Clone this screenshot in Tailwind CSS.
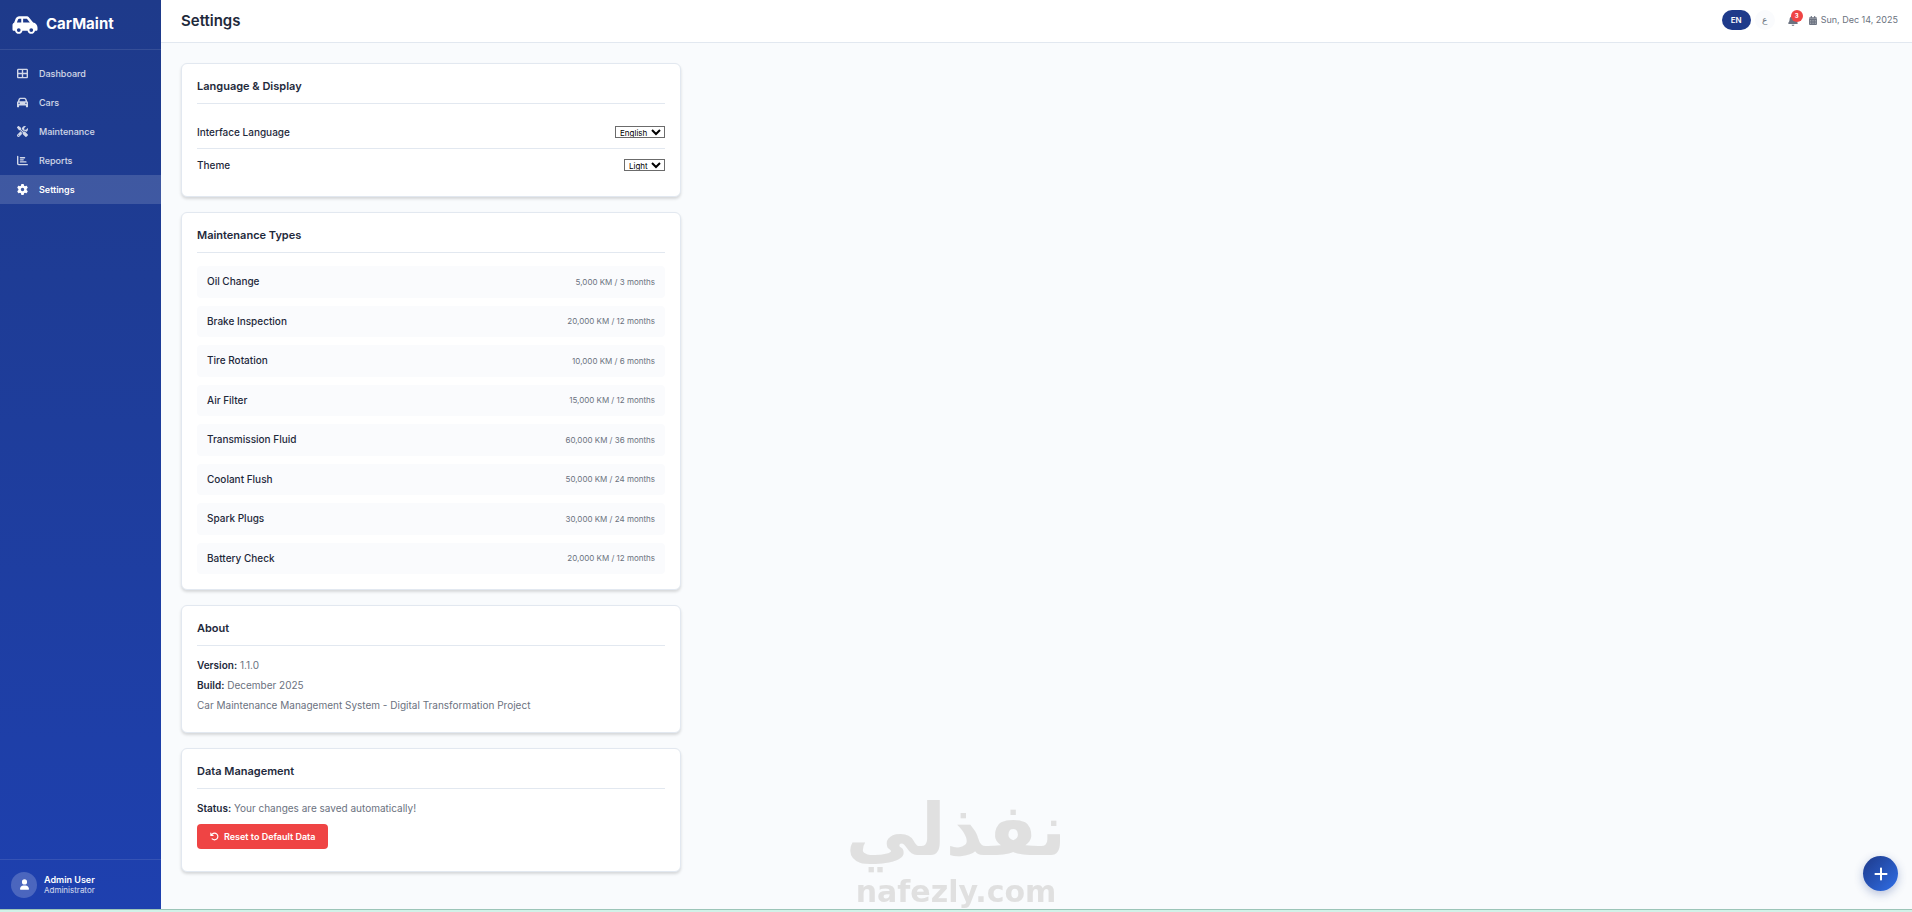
<!DOCTYPE html>
<html lang="en">
<head>
  <meta charset="UTF-8">
  <meta name="viewport" content="width=device-width, initial-scale=1.0">
  <title>CarMaint - Settings</title>
  <script src="https://cdn.jsdelivr.net/npm/@tailwindcss/browser@4"></script>
</head>
<body class="min-h-screen flex flex-col bg-[#f9fbfd] text-[#1e293b] font-['Inter','DejaVu_Sans',sans-serif]">
  <div class="flex flex-1">

    <!-- Sidebar -->
    <aside class="w-[161px] shrink-0 flex flex-col text-white bg-linear-to-b from-[#1e3a8a] to-[#1e40af]">
      <div class="h-[50px] flex items-center gap-2 px-3 border-b border-white/10">
        <svg class="w-[26px] h-5" viewBox="0 0 640 512" fill="currentColor"><path d="M171.3 96H224v96H111.3l30.4-75.9C146.5 104 158.2 96 171.3 96zM272 192V96h81.2c9.7 0 18.9 4.4 25 12l67 84H272zm256.2 1L428.2 68c-18.2-22.8-45.8-36-75-36H171.3c-39.3 0-74.6 23.9-89.1 60.3L40.6 196.4C16.8 205.8 0 228.9 0 256V368c0 17.7 14.3 32 32 32H65.3c7.6 45.4 47.1 80 94.7 80s87.1-34.6 94.7-80H385.3c7.6 45.4 47.1 80 94.7 80s87.1-34.6 94.7-80H608c17.7 0 32-14.3 32-32V320c0-65.2-48.8-119-111.8-127zM480 336a48 48 0 1 1 0 96 48 48 0 1 1 0-96zM160 336a48 48 0 1 1 0 96 48 48 0 1 1 0-96z"/></svg>
        <span class="text-[15px] font-bold">CarMaint</span>
      </div>

      <nav class="flex-1 pt-[9px] text-[9px] font-medium text-white/80">
        <a href="#" class="h-[29px] flex items-center gap-[11px] px-[17px]">
          <svg class="size-[11px]" viewBox="0 0 512 512" fill="currentColor"><path d="M448 96V224H288V96H448zm0 192V416H288V288H448zM224 224H64V96H224V224zM64 288H224V416H64V288zM64 32C28.7 32 0 60.7 0 96V416c0 35.3 28.7 64 64 64H448c35.3 0 64-28.7 64-64V96c0-35.3-28.7-64-64-64H64z"/></svg>
          Dashboard
        </a>
        <a href="#" class="h-[29px] flex items-center gap-[11px] px-[17px]">
          <svg class="size-[11px]" viewBox="0 0 512 512" fill="currentColor"><path d="M135.2 117.4L109.1 192H402.9l-26.1-74.6C372.3 104.6 360.2 96 346.6 96H165.4c-13.6 0-25.7 8.6-30.2 21.4zM39.6 196.8L74.8 96.3C88.3 57.8 124.6 32 165.4 32H346.6c40.8 0 77.1 25.8 90.6 64.3l35.2 100.5c23.2 9.6 39.6 32.5 39.6 59.2V400v48c0 17.7-14.3 32-32 32H448c-17.7 0-32-14.3-32-32V400H96v48c0 17.7-14.3 32-32 32H32c-17.7 0-32-14.3-32-32V400 256c0-26.7 16.4-49.6 39.6-59.2zM128 288a32 32 0 1 0 -64 0 32 32 0 1 0 64 0zm288 32a32 32 0 1 0 0-64 32 32 0 1 0 0 64z"/></svg>
          Cars
        </a>
        <a href="#" class="h-[29px] flex items-center gap-[11px] px-[17px]">
          <svg class="size-[11px]" viewBox="0 0 512 512" fill="currentColor"><path d="M78.6 5C69.1-2.4 55.6-1.5 47 7L7 47c-8.5 8.5-9.4 22-2.1 31.6l80 104c4.5 5.9 11.6 9.4 19 9.4h54.1l109 109c-14.7 29-10 65.4 14.3 89.6l112 112c12.5 12.5 32.8 12.5 45.3 0l64-64c12.5-12.5 12.5-32.8 0-45.3l-112-112c-24.2-24.2-60.6-29-89.6-14.3l-109-109V104c0-7.5-3.5-14.5-9.4-19L78.6 5zM19.9 396.1C7.2 408.8 0 426.1 0 444.1C0 481.6 30.4 512 67.9 512c18 0 35.3-7.2 48-19.9L233.7 374.3c-7.8-20.9-9-43.6-3.6-65.1l-61.7-61.7L19.9 396.1zM512 144c0-10.5-1.1-20.7-3.2-30.5c-2.4-11.2-16.1-14.1-24.2-6l-63.9 63.9c-3 3-7.1 4.7-11.3 4.7H352c-8.8 0-16-7.2-16-16V102.6c0-4.2 1.7-8.3 4.7-11.3l63.9-63.9c8.1-8.1 5.2-21.8-6-24.2C388.7 1.1 378.5 0 368 0C288.5 0 224 64.5 224 144l0 .8 85.3 85.3c36-9.1 75.8 .5 104 28.7L429 274.5c49-23 83-72.8 83-130.5zM56 432a24 24 0 1 1 48 0 24 24 0 1 1 -48 0z"/></svg>
          Maintenance
        </a>
        <a href="#" class="h-[29px] flex items-center gap-[11px] px-[17px]">
          <svg class="size-[11px]" viewBox="0 0 512 512" fill="currentColor"><path d="M32 32c17.7 0 32 14.3 32 32V400c0 8.8 7.2 16 16 16H480c17.7 0 32 14.3 32 32s-14.3 32-32 32H80c-44.2 0-80-35.8-80-80V64C0 46.3 14.3 32 32 32zm96 96c0-17.7 14.3-32 32-32l192 0c17.7 0 32 14.3 32 32s-14.3 32-32 32H160c-17.7 0-32-14.3-32-32zm32 64H288c17.7 0 32 14.3 32 32s-14.3 32-32 32H160c-17.7 0-32-14.3-32-32s14.3-32 32-32zm0 96H416c17.7 0 32 14.3 32 32s-14.3 32-32 32H160c-17.7 0-32-14.3-32-32s14.3-32 32-32z"/></svg>
          Reports
        </a>
        <a href="#" class="h-[29px] flex items-center gap-[11px] px-[17px] bg-white/15 text-white font-semibold">
          <svg class="size-[11px]" viewBox="0 0 512 512" fill="currentColor"><path d="M495.9 166.6c3.2 8.7 .5 18.4-6.4 24.6l-43.3 39.4c1.1 8.3 1.7 16.8 1.7 25.4s-.6 17.1-1.7 25.4l43.3 39.4c6.9 6.2 9.6 15.9 6.4 24.6c-4.4 11.9-9.7 23.3-15.8 34.3l-4.7 8.1c-6.6 11-14 21.4-22.1 31.2c-5.9 7.2-15.7 9.6-24.5 6.8l-55.7-17.7c-13.4 10.3-28.2 18.9-44 25.4l-12.5 57.1c-2 9.1-9 16.3-18.2 17.8c-13.8 2.3-28 3.5-42.5 3.5s-28.7-1.2-42.5-3.5c-9.2-1.5-16.2-8.7-18.2-17.8l-12.5-57.1c-15.8-6.5-30.6-15.1-44-25.4L83.1 425.9c-8.8 2.8-18.6 .3-24.5-6.8c-8.1-9.8-15.5-20.2-22.1-31.2l-4.7-8.1c-6.1-11-11.4-22.4-15.8-34.3c-3.2-8.7-.5-18.4 6.4-24.6l43.3-39.4C64.6 273.1 64 264.6 64 256s.6-17.1 1.7-25.4L22.4 191.2c-6.9-6.2-9.6-15.9-6.4-24.6c4.4-11.9 9.7-23.3 15.8-34.3l4.7-8.1c6.6-11 14-21.4 22.1-31.2c5.9-7.2 15.7-9.6 24.5-6.8l55.7 17.7c13.4-10.3 28.2-18.9 44-25.4l12.5-57.1c2-9.1 9-16.3 18.2-17.8C227.3 1.2 241.5 0 256 0s28.7 1.2 42.5 3.5c9.2 1.5 16.2 8.7 18.2 17.8l12.5 57.1c15.8 6.5 30.6 15.1 44 25.4l55.7-17.7c8.8-2.8 18.6-.3 24.5 6.8c8.1 9.8 15.5 20.2 22.1 31.2l4.7 8.1c6.1 11 11.4 22.4 15.8 34.3zM256 336a80 80 0 1 0 0-160 80 80 0 1 0 0 160z"/></svg>
          Settings
        </a>
      </nav>

      <div class="h-[50px] flex items-center gap-[7px] px-[11px] border-t border-white/10">
        <div class="size-[26px] rounded-full bg-white/20 flex items-center justify-center">
          <svg class="w-[9px] h-[11px]" viewBox="0 0 448 512" fill="currentColor"><path d="M224 256A128 128 0 1 0 224 0a128 128 0 1 0 0 256zm-45.7 48C79.8 304 0 383.8 0 482.3C0 498.7 13.3 512 29.7 512H418.3c16.4 0 29.7-13.3 29.7-29.7C448 383.8 368.2 304 269.7 304H178.3z"/></svg>
        </div>
        <div class="leading-[10px]">
          <p class="text-[9px] font-semibold">Admin User</p>
          <p class="text-[8px] text-white/80">Administrator</p>
        </div>
      </div>
    </aside>

    <div class="flex-1 flex flex-col">
      <!-- Top bar -->
      <header class="h-[43px] flex items-center justify-between pl-5 pr-3.5 bg-white border-b border-[#e2e8f0]">
        <h1 class="text-[15px] font-semibold">Settings</h1>
        <div class="flex items-center pb-0.5 text-[#6b7280]">
          <button class="w-[29px] h-5 rounded-full bg-[#1e3a8a] text-white text-[8px] font-semibold">EN</button>
          <button class="w-5 h-5 ml-1 rounded-full bg-[#fafbfd] text-[9px]" lang="ar">ع</button>
          <button class="relative ml-3 p-px" aria-label="Notifications">
            <svg class="w-2.5 h-[11px]" viewBox="0 0 448 512" fill="currentColor"><path d="M224 0c-17.7 0-32 14.3-32 32V51.2C119 66 64 130.6 64 208v18.8c0 47-17.3 92.4-48.5 127.6l-7.4 8.3c-8.4 9.4-10.4 22.9-5.3 34.4S19.4 416 32 416H416c12.6 0 24-7.4 29.2-18.9s3.1-25-5.3-34.4l-7.4-8.3C401.3 319.2 384 273.9 384 226.8V208c0-77.4-55-142-128-156.8V32c0-17.7-14.3-32-32-32zm45.3 493.3c12-12 18.7-28.3 18.7-45.3H224 160c0 17 6.7 33.3 18.7 45.3s28.3 18.7 45.3 18.7s33.3-6.7 45.3-18.7z"/></svg>
            <span class="absolute -top-1 -right-1 size-3 rounded-full bg-[#ef4444] text-white text-[6px] leading-3 font-bold">3</span>
          </button>
          <div class="flex items-center gap-1 ml-2.5 text-[9px]">
            <svg class="w-2 h-[9px]" viewBox="0 0 448 512" fill="currentColor"><path d="M400 64h-48V16c0-8.8-7.2-16-16-16h-32c-8.8 0-16 7.2-16 16v48H160V16c0-8.8-7.2-16-16-16h-32c-8.8 0-16 7.2-16 16v48H48C21.5 64 0 85.5 0 112v48h448v-48c0-26.5-21.5-48-48-48z"/><path fill-rule="evenodd" d="M0 176h448v288c0 26.5-21.5 48-48 48H48c-26.5 0-48-21.5-48-48zM72 256v48h48v-48zM200 256v48h48v-48zM328 256v48h48v-48zM72 384v48h48v-48zM200 384v48h48v-48zM328 384v48h48v-48z"/></svg>
            <time datetime="2025-12-14">Sun, Dec 14, 2025</time>
          </div>
        </div>
      </header>

      <main class="p-5">
        <div class="max-w-[500px] flex flex-col gap-[15px]">

          <section class="p-[15px] bg-white rounded-md border border-[#e2e8f0] shadow-[0_2px_3px_rgba(0,0,0,0.14)]">
            <h2 class="pb-2.5 text-[11px] leading-[14px] font-semibold border-b border-[#e2e8f0]">Language &amp; Display</h2>
            <div class="pt-3 text-[10px] font-medium">
              <div class="h-[33px] flex items-center justify-between border-b border-[#e2e8f0]">
                <label for="language">Interface Language</label>
                <select id="language" class="w-[50px] h-3 border border-[#6b6b6b] text-[8px] leading-[10px] font-normal text-black">
                  <option>English</option>
                  <option>العربية</option>
                </select>
              </div>
              <div class="h-8 flex items-center justify-between">
                <label for="theme">Theme</label>
                <select id="theme" class="w-[41px] h-3 border border-[#6b6b6b] text-[8px] leading-[10px] font-normal text-black">
                  <option>Light</option>
                  <option>Dark</option>
                </select>
              </div>
            </div>
          </section>

          <section class="p-[15px] bg-white rounded-md border border-[#e2e8f0] shadow-[0_2px_3px_rgba(0,0,0,0.14)]">
            <h2 class="pb-2.5 text-[11px] leading-[14px] font-semibold border-b border-[#e2e8f0]">Maintenance Types</h2>
            <ul id="maintenance-types" class="mt-[13px] h-[308px] grid gap-2"></ul>
          </section>

          <section class="p-[15px] bg-white rounded-md border border-[#e2e8f0] shadow-[0_2px_3px_rgba(0,0,0,0.14)]">
            <h2 class="pb-2.5 text-[11px] leading-[14px] font-semibold border-b border-[#e2e8f0]">About</h2>
            <div class="pt-[9px] pb-0.5 text-[10px] leading-5 text-[#6b7280]">
              <p><strong class="font-semibold text-[#1e293b]">Version:</strong> 1.1.0</p>
              <p><strong class="font-semibold text-[#1e293b]">Build:</strong> December 2025</p>
              <p>Car Maintenance Management System - Digital Transformation Project</p>
            </div>
          </section>

          <section class="p-[15px] bg-white rounded-md border border-[#e2e8f0] shadow-[0_2px_3px_rgba(0,0,0,0.14)]">
            <h2 class="pb-2.5 text-[11px] leading-[14px] font-semibold border-b border-[#e2e8f0]">Data Management</h2>
            <div class="pt-[9px] pb-[7px]">
              <p class="text-[10px] leading-5 text-[#6b7280]"><strong class="font-semibold text-[#1e293b]">Status:</strong> Your changes are saved automatically!</p>
              <button class="mt-1.5 h-[25px] px-[13px] flex items-center gap-[5px] rounded bg-[#ef4444] text-white text-[9px] font-semibold">
                <svg class="size-[9px]" viewBox="0 0 512 512" fill="currentColor"><path d="M125.7 160H176c17.7 0 32 14.3 32 32s-14.3 32-32 32H48c-17.7 0-32-14.3-32-32V64c0-17.7 14.3-32 32-32s32 14.3 32 32v51.2L97.6 97.6c87.5-87.5 229.3-87.5 316.8 0s87.5 229.3 0 316.8s-229.3 87.5-316.8 0c-12.5-12.5-12.5-32.8 0-45.3s32.8-12.5 45.3 0c62.5 62.5 163.8 62.5 226.3 0s62.5-163.8 0-226.3s-163.8-62.5-226.3 0L125.7 160z"/></svg>
                Reset to Default Data
              </button>
            </div>
          </section>

        </div>
      </main>
    </div>
  </div>

  <div class="h-[3px] bg-[#d1f2e8] border-t border-[#9cc5b8]"></div>

  <!-- Watermark -->
  <div class="fixed bottom-0 inset-x-0 flex flex-col items-center text-[#e0e0e0] font-bold pointer-events-none">
    <span class="text-[72px] leading-[84px] font-['DejaVu_Sans',sans-serif]" lang="ar" dir="rtl">نفذلي</span>
    <span class="text-[30px] leading-10 font-['DejaVu_Sans',sans-serif]">nafezly.com</span>
  </div>

  <button class="fixed right-3.5 bottom-[21px] size-[35px] rounded-full flex items-center justify-center text-white bg-linear-to-br from-[#1e3a8a] to-[#2f6fe8] shadow-[0_3px_10px_rgba(30,58,138,0.3)]" aria-label="Add">
    <svg class="w-3.5 h-4" viewBox="0 0 448 512" fill="currentColor"><path d="M256 80c0-17.7-14.3-32-32-32s-32 14.3-32 32V224H48c-17.7 0-32 14.3-32 32s14.3 32 32 32H192V432c0 17.7 14.3 32 32 32s32-14.3 32-32V288H400c17.7 0 32-14.3 32-32s-14.3-32-32-32H256V80z"/></svg>
  </button>

<script>
  const types = [
    { name: 'Oil Change', km: '5,000', months: 3 },
    { name: 'Brake Inspection', km: '20,000', months: 12 },
    { name: 'Tire Rotation', km: '10,000', months: 6 },
    { name: 'Air Filter', km: '15,000', months: 12 },
    { name: 'Transmission Fluid', km: '60,000', months: 36 },
    { name: 'Coolant Flush', km: '50,000', months: 24 },
    { name: 'Spark Plugs', km: '30,000', months: 24 },
    { name: 'Battery Check', km: '20,000', months: 12 }
  ];

  document.getElementById('maintenance-types').innerHTML = types.map(t => `
    <li class="flex items-center justify-between px-2.5 rounded bg-[#fafbfd]">
      <span class="text-[10px] font-medium">${t.name}</span>
      <span class="text-[8px] text-[#6b7280]">${t.km} KM / ${t.months} months</span>
    </li>
  `).join('');
</script>
</body>
</html>
